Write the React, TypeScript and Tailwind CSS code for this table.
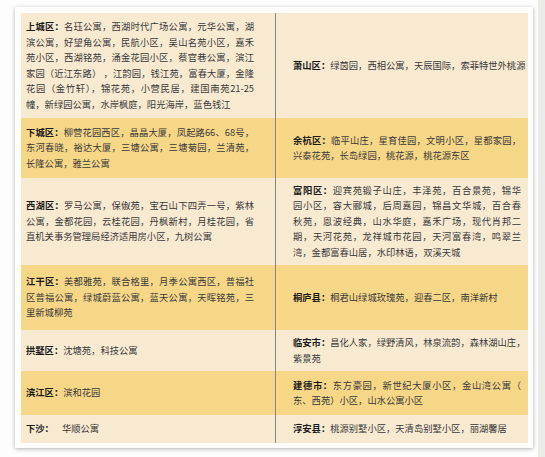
type Cell = { label: string; lines: string[]; gap?: boolean };
type Row = { h: string; gold: boolean; left: Cell; right: Cell };

const ROWS: Row[] = [
  {
    h: "h-[105px]",
    gold: false,
    left: {
      label: "上城区",
      lines: [
        "名珏公寓，西湖时代广场公寓，元华公寓，湖",
        "滨公寓，好望角公寓，民航小区，吴山名苑小区，嘉禾",
        "苑小区，西湖铭苑，涌金花园小区，蔡官巷公寓，滨江",
        "家园（近江东路） ，江韵园，钱江苑，富春大厦，金隆",
        "花园（金竹轩），锦花苑，小营民居，建国南苑21-25",
        "幢，新绿园公寓，水岸枫庭，阳光海岸，蓝色钱江",
      ],
    },
    right: { label: "萧山区", lines: ["绿茵园，西相公寓，天辰国际，索菲特世外桃源"] },
  },
  {
    h: "h-[60px]",
    gold: true,
    left: {
      label: "下城区",
      lines: [
        "柳营花园西区，晶晶大厦，凤起路66、68号，",
        "东河春晓，裕达大厦，三塘公寓，三塘菊园，兰清苑，",
        "长隆公寓，雅兰公寓",
      ],
    },
    right: {
      label: "余杭区",
      lines: ["临平山庄，星育佳园，文明小区，星都家园，", "兴泰花苑，长岛绿园，桃花源，桃花源东区"],
    },
  },
  {
    h: "h-[87px]",
    gold: false,
    left: {
      label: "西湖区",
      lines: [
        "罗马公寓，保俶苑，宝石山下四弄一号，紫林",
        "公寓，金都花园，云桂花园，丹枫新村，月桂花园，省",
        "直机关事务管理局经济适用房小区，九树公寓",
      ],
    },
    right: {
      label: "富阳区",
      lines: [
        "迎宾苑锻子山庄，丰泽苑，百合景苑，锦华",
        "园小区，容大郦城，后周嘉园，锦昌文华城，百合春",
        "秋苑，恩波经典，山水华庭，嘉禾广场，现代肖邦二",
        "期，天河花苑，龙祥城市花园，天河富春湾，鸣翠兰",
        "湾，金都富春山居，水印林语，双溪天城",
      ],
    },
  },
  {
    h: "h-[65px]",
    gold: true,
    left: {
      label: "江干区",
      lines: [
        "美都雅苑，联合格里，月季公寓西区，普福社",
        "区普福公寓，绿城蔚蓝公寓，蓝天公寓，天晖铭苑，三",
        "里新城柳苑",
      ],
    },
    right: { label: "桐庐县", lines: ["桐君山绿城玫瑰苑，迎春二区，南洋新村"] },
  },
  {
    h: "h-[41px]",
    gold: false,
    left: { label: "拱墅区", lines: ["沈塘苑，科技公寓"] },
    right: { label: "临安市", lines: ["昌化人家，绿野清风，林泉流韵，森林湖山庄，", "紫景苑"] },
  },
  {
    h: "h-[44px]",
    gold: true,
    left: { label: "滨江区", lines: ["滨和花园"] },
    right: { label: "建德市", lines: ["东方豪园，新世纪大厦小区，金山湾公寓（", "东、西苑）小区，山水公寓小区"] },
  },
  {
    h: "h-[28px]",
    gold: false,
    left: { label: "下沙", lines: ["华顺公寓"], gap: true },
    right: { label: "淳安县", lines: ["桃源别墅小区，天清岛别墅小区，丽湖馨居"] },
  },
];

function CellText({ cell }: { cell: Cell }) {
  return (
    <div className="w-[228px]">
      {cell.lines.map((line, i) => {
        const last = i === cell.lines.length - 1;
        return (
          <span
            key={i}
            className={
              last
                ? "block whitespace-nowrap"
                : "block whitespace-nowrap text-justify [text-align-last:justify]"
            }
          >
            {i === 0 && <b className="font-bold text-[#1c1c1c]">{cell.label}：</b>}
            {i === 0 && cell.gap && <span className="inline-block w-[8px]" />}
            {line}
          </span>
        );
      })}
    </div>
  );
}

export default function App() {
  return (
    <div className="flex h-[457px] w-[545px] bg-[#fdfdfd] font-['Noto_Sans_CJK_SC',sans-serif] text-[9.3px] leading-[15.5px] text-[#3a3a3a]">
      <div className="flex-1 pl-[15px] pt-[7px]">
        <div className="w-[518px] bg-white pt-[6px] pr-[5px] pb-[5px] pl-[6px] shadow-[0_1px_4px_rgba(0,0,0,0.3)]">
          <div className="flex w-[507px] flex-col">
            {ROWS.map((row) => (
              <div
                key={row.left.label}
                className={`flex ${row.h} ${row.gold ? "bg-[#f6d687]" : "bg-[#f8e9d1]"}`}
              >
                <div className="flex w-[255px] items-center border-r border-[#8a8580] pl-[5px]">
                  <CellText cell={row.left} />
                </div>
                <div className="flex flex-1 items-center pl-[17px]">
                  <CellText cell={row.right} />
                </div>
              </div>
            ))}
          </div>
        </div>
      </div>
      <div className="w-[7px] bg-[#ebebe8]" />
    </div>
  );
}
